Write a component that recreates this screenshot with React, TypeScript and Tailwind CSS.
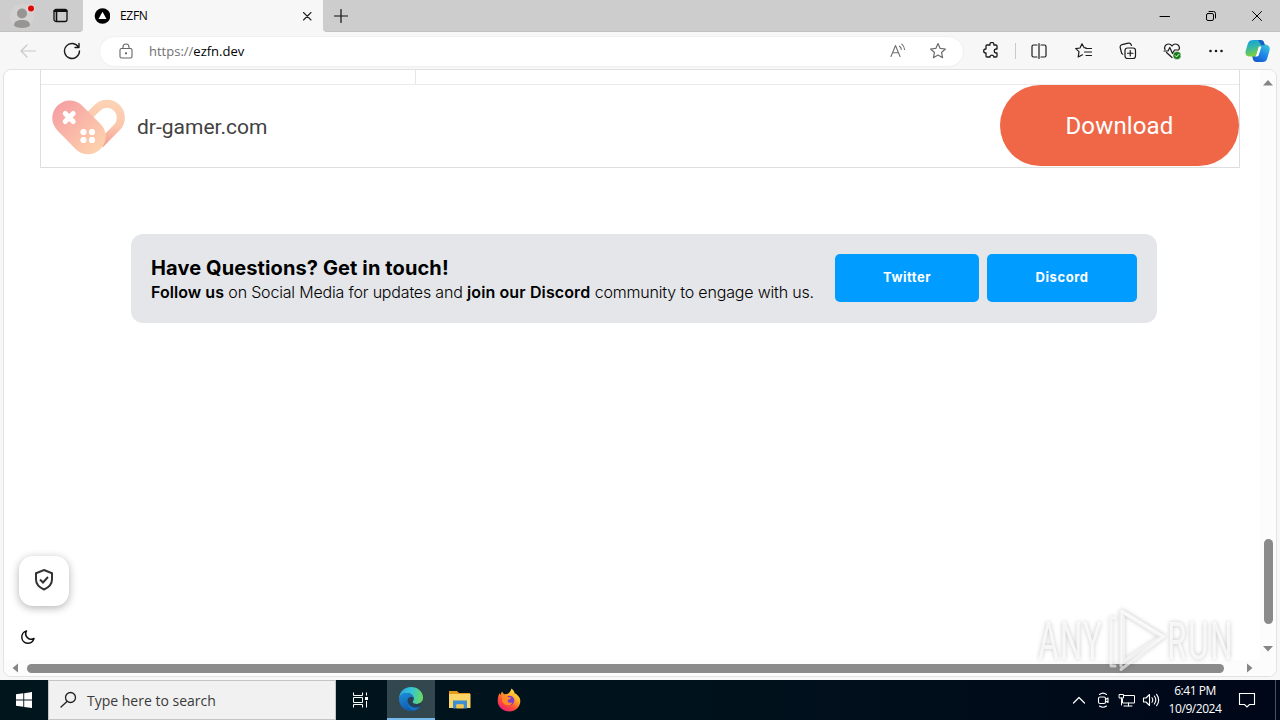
import type { ReactNode } from "react";

type IconProps = { w: number; h?: number; className?: string; sw?: number; children: ReactNode };

function Icon({ w, h, className = "", sw = 1.2, children }: IconProps) {
  const height = h ?? w;
  return (
    <svg
      width={w}
      height={height}
      viewBox={`0 0 ${w} ${height}`}
      fill="none"
      stroke="currentColor"
      strokeWidth={sw}
      strokeLinecap="round"
      strokeLinejoin="round"
      className={`block shrink-0 ${className}`}
    >
      {children}
    </svg>
  );
}

function Cell({ className, children }: { className: string; children?: ReactNode }) {
  return <div className={`flex shrink-0 items-center justify-center ${className}`}>{children}</div>;
}

function TabStrip() {
  return (
    <div className="flex h-8 shrink-0 bg-[#f7f7f7]">
      <div className="flex w-[83px] items-center rounded-br-[4px] border-b border-[#c2c2c2] bg-[#cdcdcd]">
        <Cell className="w-11">
          <Icon w={26} h={28}>
            <circle cx="13" cy="14" r="12" fill="#d4d2d0" stroke="none" />
            <circle cx="13" cy="11.500" r="5" fill="#979593" stroke="none" />
            <path d="M5 23.500c0-4 3-5.500 8-5.500s8 1.500 8 5.500c-2 1.800-5 2.500-8 2.500s-6-.7-8-2.500z" fill="#979593" stroke="none" />
            <circle cx="22" cy="6.500" r="4" fill="#f0cfcf" stroke="none" />
            <circle cx="22" cy="6.500" r="3" fill="#d90b0b" stroke="none" />
          </Icon>
        </Cell>
        <Cell className="w-8 text-[#111]">
          <Icon w={15} h={15} sw={1.3}>
            <rect x="1" y="1.500" width="13" height="12" rx="2" />
            <path d="M1.500 3h12" strokeWidth="2.200" />
            <path d="M3.500 4v9" strokeWidth="1.600" />
          </Icon>
        </Cell>
      </div>
      <div className="flex w-[240px] items-center rounded-tr-[6px] bg-[#f7f7f7]">
        <Cell className="w-[37px]">
          <Icon w={16}>
            <circle cx="8.500" cy="8" r="7.800" fill="#000" stroke="none" />
            <path d="M8.500 3.800l4 7.200h-8z" fill="#fff" stroke="none" />
          </Icon>
        </Cell>
        <span className="w-[175px] font-['Open_Sans',sans-serif] text-[12px] leading-4 tracking-[-0.3px] text-black">EZFN</span>
        <Icon w={24} h={16} sw={1.1} className="text-[#222]">
          <path d="M8.500 4.500l7.500 7.500M16 4.500l-7.500 7.500" />
        </Icon>
      </div>
      <div className="flex flex-1 items-center justify-between rounded-bl-[4px] border-b border-[#c2c2c2] bg-[#cdcdcd]">
        <Cell className="w-[35px] text-[#111]">
          <Icon w={14}>
            <path d="M7 .5v13M.5 7h13" />
          </Icon>
        </Cell>
        <div className="flex text-black">
          <Cell className="w-[46px]">
            <Icon w={12} sw={1}>
              <path d="M1 6.500h9.500" />
            </Icon>
          </Cell>
          <Cell className="w-[46px]">
            <Icon w={12} sw={1}>
              <rect x="1.500" y="3.500" width="7" height="7" rx="1.500" />
              <path d="M4 1.500h4.500a2 2 0 0 1 2 2V8" />
            </Icon>
          </Cell>
          <Cell className="w-[46px]">
            <Icon w={12} sw={1}>
              <path d="M1.500 1.500l9 9M10.500 1.500l-9 9" />
            </Icon>
          </Cell>
        </div>
      </div>
    </div>
  );
}

function Copilot() {
  return (
    <svg width="26" height="24" viewBox="0 0 26 24" className="block">
      <defs>
        <linearGradient id="cpA" x1="0" y1="0" x2="0.300" y2="1">
          <stop offset="0" stopColor="#129ee0" />
          <stop offset="0.450" stopColor="#2fb5b0" />
          <stop offset="1" stopColor="#7fd13b" />
        </linearGradient>
        <linearGradient id="cpB" x1="0.800" y1="0" x2="0.200" y2="1">
          <stop offset="0" stopColor="#36c5d6" />
          <stop offset="0.500" stopColor="#1f86ea" />
          <stop offset="1" stopColor="#1458c8" />
        </linearGradient>
      </defs>
      <path d="M14 5.500h5.500c4 0 6 2.500 5 6l-2.300 8c-.8 2.700-2.200 3.500-4.700 3.500h-6c-2 0-3-1-3.600-3l-.9-3.500h3c2 0 3-1 3.500-2.700z" fill="url(#cpB)" />
      <path d="M8.500 1h7c2 0 3 .8 3.600 2.800l.7 2.400h-2.600c-2 0-2.900.8-3.400 2.500l-1.800 6.200c-.5 1.700-1.500 2.600-3.500 2.600H5c-4 0-5.200-2.500-4.200-6l2-6.700C3.800 1.800 5.500 1 8.500 1z" fill="url(#cpA)" />
      <path d="M8.500 1h7c2 0 3 .8 3.600 2.800l.7 2.400h-3.500L13 1z" fill="#175fcb" />
      <path d="M13.800 7.500h2.600l-2.600 8.500c-.3.900-.8 1.400-1.600 1.400H9.500c1.200-.4 1.700-1 2-2z" fill="#fff" />
    </svg>
  );
}

function Toolbar() {
  return (
    <div className="flex h-[38px] shrink-0 items-center bg-[#f7f7f7] text-[#1b1b1b]">
      <Cell className="w-[56px] text-[#c8c8c8]">
        <Icon w={18} h={16}>
          <path d="M16.500 8H2M8 2L2 8l6 6" />
        </Icon>
      </Cell>
      <Cell className="w-8">
        <Icon w={18} sw={1.4}>
          <path d="M15.500 5.200A7.500 7.500 0 1 0 16.500 9M16 1.500v4h-4" />
        </Icon>
      </Cell>
      <div className="ml-[11px] flex h-[31px] w-[865px] items-center rounded-full border border-[#f0f0f0] bg-white">
        <Cell className="w-[49px] text-[#666]">
          <Icon w={14} h={16} sw={1.1} className="ml-[3px]">
            <rect x="1" y="5.500" width="12" height="9.500" rx="1.500" />
            <path d="M4 5.500V4a3 3 0 0 1 6 0v1.500" />
            <circle cx="7" cy="10.300" r=".6" fill="currentColor" />
          </Icon>
        </Cell>
        <span className="flex-1 font-['Open_Sans',sans-serif] text-[13px] leading-5 text-[#707070]">
          https://<span className="text-black">ezfn.dev</span>
        </span>
        <Cell className="w-10 text-[#707070]">
          <Icon w={18} h={16} sw={1.1}>
            <path d="M2 13.500L6.500 2.500 11 13.500M3.500 9.700h6" />
            <path d="M10.500 3.200a4.500 4.500 0 0 1 1.800 3.300M12.800 1.200A7.500 7.500 0 0 1 15.500 6.500" />
          </Icon>
        </Cell>
        <Cell className="mr-[5px] w-10 text-[#6b6b6b]">
          <Icon w={18}>
            <path d="M9 1.600l2.200 4.800 5.200.6-3.900 3.500 1.100 5.200L9 13.100l-4.600 2.600 1.100-5.200L1.600 7l5.200-.6z" />
          </Icon>
        </Cell>
      </div>
      <Cell className="ml-[5px] w-11">
        <Icon w={18} sw={1.3}>
          <path d="M5 3h3a2 2 0 1 1 3.800 0H14a1 1 0 0 1 1 1v3h-.7a2 2 0 0 0 0 4h.7v3a1 1 0 0 1-1 1h-2.200v-.5a2 2 0 0 0-3.800 0v.5H5a1 1 0 0 1-1-1v-3h-.3a2 2 0 1 1 0-4H4V4a1 1 0 0 1 1-1z" />
        </Icon>
      </Cell>
      <div className="mx-[2px] h-4 w-px bg-[#c9c9c9]" />
      <Cell className="-ml-px w-11">
        <Icon w={18}>
          <path d="M7 3H3.500A1.500 1.500 0 0 0 2 4.500v9A1.500 1.500 0 0 0 3.500 15H7M11 3h3.500A1.500 1.500 0 0 1 16 4.500v9a1.500 1.500 0 0 1-1.500 1.500H11M9 1.500v15" />
        </Icon>
      </Cell>
      <Cell className="ml-px w-11">
        <Icon w={18}>
          <path d="M11 5.900L9.200 5.700 7 1.800 5 6l-4.300.6L4 9.600 3.200 15l4.300-2.200M11 6.500h5.500M9.500 10h7M11 13.500h5.500" />
        </Icon>
      </Cell>
      <Cell className="w-11">
        <Icon w={18}>
          <rect x="6" y="6" width="10.500" height="10.500" rx="2.500" />
          <path d="M11.250 8.500v5.500M8.500 11.250h5.500M3.800 12.200A2.500 2.500 0 0 1 2.300 10L1.200 5.500A2.300 2.300 0 0 1 3 2.700l6.200-1.500a2.500 2.500 0 0 1 3 1.600l.2.700" />
        </Icon>
      </Cell>
      <Cell className="w-11">
        <Icon w={19} h={18}>
          <path d="M2 7.500C.8 5 2.500 2 5.500 2c1.500 0 2.700.8 3.500 2 .8-1.200 2-2 3.500-2 3 0 4.700 3 3.500 5.500M3.500 10.500L9 15.500M1 9h4l1.800-3.500L9.500 11.500 11.500 8h4" />
          <circle cx="14" cy="13.500" r="4" fill="#197d19" stroke="#f7f7f7" strokeWidth=".5" />
          <path d="M12.200 13.600l1.300 1.300 2.400-2.500" stroke="#fff" strokeWidth="1" />
        </Icon>
      </Cell>
      <Cell className="w-11">
        <Icon w={16} h={4}>
          <g fill="currentColor" stroke="none">
            <circle cx="2.500" cy="2" r="1.300" />
            <circle cx="8" cy="2" r="1.300" />
            <circle cx="13.500" cy="2" r="1.300" />
          </g>
        </Icon>
      </Cell>
      <Cell className="w-10">
        <Copilot />
      </Cell>
    </div>
  );
}

function HeartLogo() {
  return (
    <svg width="74" height="56" viewBox="0 0 74 56" className="block shrink-0">
      <defs>
        <linearGradient id="padFill" x1="0.100" y1="0.100" x2="0.850" y2="0.900">
          <stop offset="0" stopColor="#f6a0a3" />
          <stop offset="1" stopColor="#fdd0ad" />
        </linearGradient>
        <linearGradient id="loopFill" gradientUnits="userSpaceOnUse" x1="56" y1="4" x2="54" y2="46">
          <stop offset="0" stopColor="#fcd2b4" />
          <stop offset="0.550" stopColor="#fbc6ad" />
          <stop offset="1" stopColor="#f3a093" />
        </linearGradient>
      </defs>
      <path d="M36 18L45.200 8.900A13.800 13.800 0 0 1 64.800 28.500L48 45.500" fill="none" stroke="url(#loopFill)" strokeWidth="8" />
      <path d="M5.500 31.500A17.500 17.500 0 0 1 30 6.500l18.500 18.500a17.500 17.500 0 0 1 0 25 17.500 17.500 0 0 1-25 0z" fill="url(#padFill)" />
      <path d="M13.200 14.500l8 8M21.200 14.500l-8 8" stroke="#fff" strokeWidth="5" strokeLinecap="round" />
      <g fill="#fff">
        <circle cx="31.500" cy="33" r="3.100" />
        <circle cx="40" cy="33" r="3.100" />
        <circle cx="31.500" cy="41" r="3.100" />
        <circle cx="40" cy="41" r="3.100" />
      </g>
    </svg>
  );
}

function AdBanner() {
  return (
    <div className="ml-9 w-[1200px] border-x border-b border-[#dedede]">
      <div className="flex h-[15px] border-b border-[#ebebeb]">
        <div className="w-[375px] border-r border-[#e6e6e6]" />
      </div>
      <div className="flex h-[82px] items-start">
        <div className="flex flex-1 pl-[11px] pt-[14px]">
          <HeartLogo />
          <span className="ml-[11px] mt-[14px] whitespace-nowrap font-['Roboto',sans-serif] text-[21px] leading-7 text-[#424242]">dr-gamer.com</span>
        </div>
        <button className="h-[81px] w-[239px] rounded-[41px] bg-[#ef6747] font-['Roboto',sans-serif] text-[24px] tracking-[0.150px] text-white">
          Download
        </button>
      </div>
    </div>
  );
}

function ContactCard() {
  return (
    <div className="ml-[127px] mt-[66px] flex h-[89px] w-[1026px] items-start rounded-xl bg-[#e4e6e9] p-5 font-['Inter',sans-serif]">
      <div className="w-[684px] whitespace-nowrap text-black">
        <h2 className="text-[20px] font-bold leading-7 tracking-[0.110px]">Have Questions? Get in touch!</h2>
        <p className="text-[16px] font-light leading-[21px] tracking-[-0.180px]">
          <b className="font-semibold tracking-[0.050px]">Follow us</b> on Social Media for updates and{" "}
          <b className="font-semibold tracking-[0.120px]">join our Discord</b> community to engage with us.
        </p>
      </div>
      <button className="h-12 w-36 rounded-[5px] bg-[#009cff] pb-px text-[13px] font-bold tracking-[0.500px] text-white">Twitter</button>
      <button className="ml-2 h-12 w-[150px] rounded-[5px] bg-[#009cff] pb-px text-[13px] font-bold tracking-[0.600px] text-white">Discord</button>
    </div>
  );
}

function VerticalScrollbar() {
  return (
    <div className="flex w-4 shrink-0 flex-col items-center bg-[#fcfcfc] pt-[10px] text-[#858585]">
      <Icon w={10} h={6}>
        <path d="M5 0l5 5.500H0z" fill="currentColor" stroke="none" />
      </Icon>
      <div className="mt-[453px] h-[85px] w-[9px] rounded-full bg-[#8a8a8a]" />
      <Icon w={10} h={6} className="mt-[22px]">
        <path d="M0 0h10L5 5.500z" fill="currentColor" stroke="none" />
      </Icon>
    </div>
  );
}

function HorizontalScrollbar() {
  return (
    <div className="flex h-4 shrink-0 items-center bg-[#fcfcfc] pl-2 text-[#858585]">
      <Icon w={6} h={10}>
        <path d="M6 .5v9L.5 5z" fill="currentColor" stroke="none" />
      </Icon>
      <div className="ml-[9px] h-[9px] w-[1197px] rounded-full bg-[#8a8a8a]" />
      <Icon w={6} h={10} className="ml-[23px]">
        <path d="M0 .5v9L5.500 5z" fill="currentColor" stroke="none" />
      </Icon>
    </div>
  );
}

function Watermark() {
  return (
    <svg width="230" height="80" viewBox="0 0 230 80" className="absolute left-[1034px] top-[600px] drop-shadow-[0_0_2px_rgba(0,0,0,0.3)]">
      <g transform="scale(0.6 1)" fill="#fff" fillOpacity=".75" fontFamily="Roboto, sans-serif" fontSize="52">
        <text x="7" y="59" textLength="106" lengthAdjust="spacing">ANY</text>
        <text x="222" y="59" textLength="109" lengthAdjust="spacing">RUN</text>
      </g>
      <g fill="none" stroke="#fff" strokeOpacity=".6" strokeLinejoin="round" strokeLinecap="round">
        <path d="M89 12l39 24.500L89 62z" strokeWidth="4" />
        <path d="M87 66V11l43 25.500L87 69.500" strokeWidth="3" />
        <path d="M81 18h-4v48h4" strokeWidth="3" />
      </g>
    </svg>
  );
}

function PageView() {
  return (
    <div className="mx-[3px] flex h-[608px] shrink-0 flex-col overflow-hidden rounded-lg border border-[#e2e2e2] bg-white">
      <div className="flex h-[590px]">
        <div className="w-[1256px] shrink-0">
          <AdBanner />
          <ContactCard />
          <div className="ml-[15px] mt-[233px] flex h-[50px] w-[50px] items-center justify-center rounded-[14px] bg-white pb-[2px] text-[#343434] shadow-[0_2px_8px_rgba(0,0,0,0.3)]">
            <Icon w={20} h={24} sw={2}>
              <path d="M10 2l8 3.200v6.300c0 4.800-3.500 8-8 10-4.500-2-8-5.200-8-10V5.200z" strokeLinejoin="miter" />
              <path d="M6 11.500l3 3 5-5.500" strokeLinecap="butt" strokeLinejoin="miter" />
            </Icon>
          </div>
          <Icon w={16} sw={1.5} className="ml-4 mt-[23px] text-[#111]">
            <path d="M6.500 2A6.200 6.200 0 1 0 14 9.500 5.500 5.500 0 0 1 6.500 2z" />
          </Icon>
        </div>
        <VerticalScrollbar />
      </div>
      <HorizontalScrollbar />
    </div>
  );
}

function EdgeLogo() {
  return (
    <svg width="26" height="26" viewBox="0 0 26 26" className="block">
      <defs>
        <linearGradient id="edTop" x1="0" y1="0.400" x2="1" y2="0.500">
          <stop offset="0" stopColor="#2aa5e0" />
          <stop offset="0.500" stopColor="#35c4d7" />
          <stop offset="1" stopColor="#6bdc5b" />
        </linearGradient>
        <linearGradient id="edLow" x1="0" y1="0" x2="0.500" y2="1">
          <stop offset="0" stopColor="#1b8fdd" />
          <stop offset="1" stopColor="#0f58a8" />
        </linearGradient>
      </defs>
      <path d="M1 13C1 6 6 1 13 1s12 5 12 10.500c0 4-3 6.500-6.500 6.500-2.500 0-4-1-4-2 0-.8 1.200-1.200 1.200-3.500C15.700 9 12 7 8.500 7S2 9.500 1 13z" fill="url(#edTop)" />
      <path d="M1 13c1-4 4-6 7.500-6 4 0 7.200 2.500 7.200 5.500-.8-1.200-2-1.700-3-1.500C10 11.500 9 14 9.500 16.500c.7 3.500 4 5.500 7.500 5.500 2 0 4-.7 5.500-1.700C20.500 23.500 17 25 13 25 6 25 1 19.500 1 13z" fill="url(#edLow)" />
      <path d="M9.300 13.500C8 18 10.500 24 16 24.500c3-.7 5.200-2.200 6.700-4.500-6 3-12.500.5-13.400-6.500z" fill="#1272c4" />
      <path d="M15.700 12.500c0 2.300-1.200 2.700-1.200 3.500 0 1 1.500 2 4 2 1.800 0 3.400-.6 4.600-1.700l-.4 4c-5 2.700-11.500.7-12.900-4.300-.5-2.500.5-4.500 2.900-5 1-.2 2.200.3 3 1.500z" fill="#263f55" fillOpacity=".85" />
    </svg>
  );
}

function FirefoxLogo() {
  return (
    <svg width="24" height="24" viewBox="0 0 24 24" className="block">
      <defs>
        <linearGradient id="ffBody" x1="0.850" y1="0" x2="0.200" y2="1">
          <stop offset="0" stopColor="#fff04a" />
          <stop offset="0.350" stopColor="#ffb02a" />
          <stop offset="0.650" stopColor="#ff5034" />
          <stop offset="1" stopColor="#e8197c" />
        </linearGradient>
      </defs>
      <path d="M2.500 5l.8 2L5 3.500l2 2.700 3-.2c2-.5 3.500-2.500 4.500-5.500 2 1.500 2.800 3 3.200 5 1-.2 1.500.3 2 1C22 8.500 23.300 10 23.300 13c0 6-5 10.500-11 10.500S.7 19 .7 13C.7 10 1.300 7.500 2.500 5z" fill="url(#ffBody)" />
      <circle cx="12.500" cy="12.500" r="4.800" fill="#7d3fc9" />
      <path d="M5 8.500c2.500-1.700 5-1 6.500.8l2.500.2c-.2 1.700-2 2-3.200 2.500-.7 2.500 2.200 3.500 4.700 2.500-2 4.500-9 3.500-10.500-1.500z" fill="#ff8a26" />
    </svg>
  );
}

function Taskbar() {
  return (
    <div className="flex h-10 shrink-0 bg-linear-to-r from-[#00151c] via-[#00131d] to-[#000718] text-white">
      <Cell className="w-12">
        <Icon w={16}>
          <path d="M0 2.300L7.300 1.300v6.300H0zM8.200 1.200L16 0v7.600H8.200zM0 8.500h7.300v6.300L0 13.700zM8.200 8.500H16V16l-7.800-1.100z" fill="#fff" stroke="none" />
        </Icon>
      </Cell>
      <div className="flex w-[288px] items-center border border-[#c4c4c4] bg-[#f1f1f1] text-[#222]">
        <Icon w={18} sw={1.3} className="ml-[10px]">
          <circle cx="11.500" cy="6.500" r="5" />
          <path d="M8 10.500L2 16" />
        </Icon>
        <span className="ml-[10px] whitespace-nowrap pt-px font-['Open_Sans',sans-serif] text-[14px] leading-5 text-[#3a3a3a]">Type here to search</span>
      </div>
      <Cell className="w-[51px] pr-1">
        <Icon w={18} sw={1}>
          <path d="M2.500 1.500v3h9v-3M2.500 16.500v-3h9v3M2.500 6.500h9v5h-9zM15.500 1.500v3M15.500 10v6.500" strokeLinejoin="miter" strokeLinecap="butt" />
          <rect x="14" y="6" width="3" height="3" fill="#fff" stroke="none" />
        </Icon>
      </Cell>
      <Cell className="w-12 border-b-2 border-[#76b9ed] bg-[#33474e]">
        <EdgeLogo />
      </Cell>
      <Cell className="w-[50px]">
        <Icon w={22} h={20}>
          <g stroke="none">
            <path d="M0 1h8l2 2h11v4H0z" fill="#e59a1c" />
            <path d="M0 4h21.500v14H0z" fill="#fbd565" />
            <path d="M4 10.500h14V18.500h-3.500v-4h-7v4H4z" fill="#3c8fd0" />
            <path d="M7.500 14.500h7v4h-7z" fill="#f3c34b" />
          </g>
        </Icon>
      </Cell>
      <Cell className="w-12">
        <FirefoxLogo />
      </Cell>
      <div className="ml-auto flex items-center">
        <Cell className="w-6">
          <Icon w={14} h={8}>
            <path d="M1.500 7L7 1.500 12.500 7" />
          </Icon>
        </Cell>
        <Cell className="w-6">
          <Icon w={14} h={16} sw={1.1}>
            <rect x="2.500" y="5" width="7" height="6.500" rx="1.500" />
            <path d="M9.500 7.500l2.500-1.500v4.500L9.500 9M3.500 2.500Q7-.3 10.500 2.500M3.500 14q3.500 2.500 7 0" />
          </Icon>
        </Cell>
        <Cell className="w-6">
          <Icon w={18} h={16} sw={1}>
            <path d="M6 3.500h10.500v7.500H4.500V7M1.500 2.500h4v3.500h-4zM3.500 6v7M6 14h8M10.500 11v3" strokeLinejoin="miter" />
          </Icon>
        </Cell>
        <Cell className="w-6">
          <Icon w={18} h={16} sw={1.1}>
            <path d="M1.500 6H4l3.500-3.500v11L4 10H1.500zM10 5.800q1.500 2.200 0 4.400M12.300 4q3 4 0 8M14.600 2.300q4.200 5.700 0 11.400" />
          </Icon>
        </Cell>
        <div className="flex w-16 flex-col items-center whitespace-nowrap font-['Open_Sans',sans-serif] text-[12px] leading-[18px] tracking-[-0.45px]">
          <span>6:41 PM</span>
          <span>10/9/2024</span>
        </div>
        <Cell className="w-10">
          <Icon w={18} h={18} sw={1.1}>
            <path d="M1.500 2.500h15v11H11.500L9 16l-2.500-2.500h-5z" strokeLinejoin="miter" />
          </Icon>
        </Cell>
        <div className="mr-1 ml-2 h-10 w-px bg-[#4a505c]" />
      </div>
    </div>
  );
}

export default function App() {
  return (
    <div className="relative flex h-[720px] w-[1280px] flex-col overflow-hidden bg-[#f7f7f7]">
      <TabStrip />
      <Toolbar />
      <div className="-mt-px mb-[3px]">
        <PageView />
      </div>
      <Taskbar />
      <Watermark />
    </div>
  );
}
